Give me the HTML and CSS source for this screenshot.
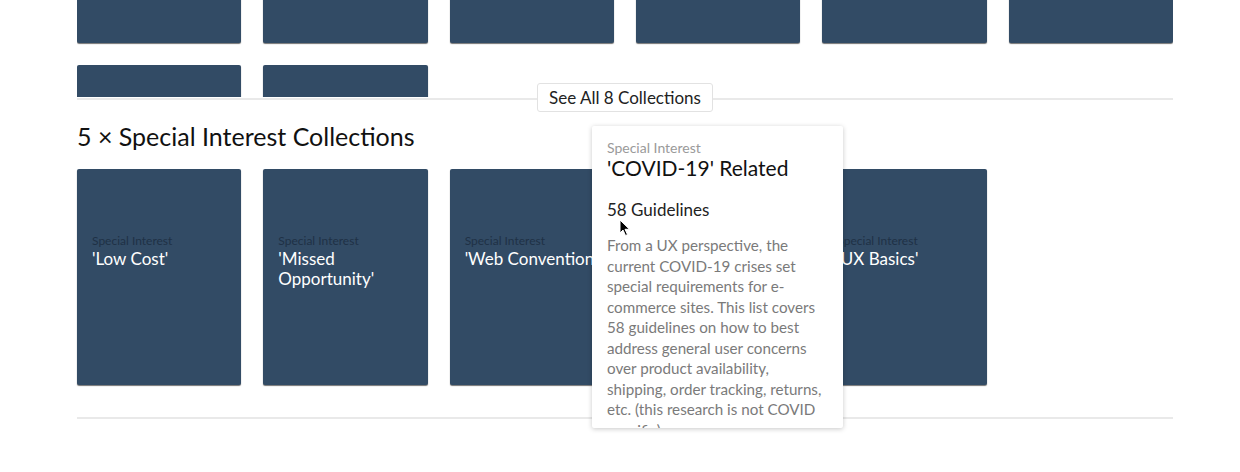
FILE: index.html
```html
<!DOCTYPE html>
<html>
<head>
<meta charset="utf-8">
<link rel="stylesheet" href="styles.css">
</head>
<body>
<div class="page">
  <section class="collection-group">
    <div class="grid-clip">
      <div class="grid grid-scrolled">
        <div class="card"></div><div class="card"></div><div class="card"></div>
        <div class="card"></div><div class="card"></div><div class="card"></div>
        <div class="card"></div><div class="card"></div>
      </div>
    </div>
    <div class="see-all-row">
      <button class="see-all">See All 8 Collections</button>
    </div>
  </section>

  <section class="collection-group">
    <h2 class="group-title">5 × Special Interest Collections</h2>
    <div class="grid">
      <div class="card"><div class="card-label">Special Interest</div><div class="card-title">'Low Cost'</div></div>
      <div class="card"><div class="card-label">Special Interest</div><div class="card-title">'Missed Opportunity'</div></div>
      <div class="card"><div class="card-label">Special Interest</div><div class="card-title">'Web Conventions'</div></div>
      <div class="card"><div class="card-label">Special Interest</div><div class="card-title">'COVID-19' Related</div></div>
      <div class="card"><div class="card-label">Special Interest</div><div class="card-title">'UX Basics'</div></div>
    </div>
    <div class="group-end"></div>
  </section>
</div>

<div class="popover">
  <div class="pop-label">Special Interest</div>
  <div class="pop-title">'COVID-19' Related</div>
  <div class="pop-count">58 Guidelines</div>
  <p class="pop-desc">From a UX perspective, the current COVID-19 crises set special requirements for e-commerce sites. This list covers 58 guidelines on how to best address general user concerns over product availability, shipping, order tracking, returns, etc. (this research is not COVID specific).</p>
</div>

<svg class="cursor" width="12" height="18" viewBox="0 0 12 18">
  <path d="M1 1 L1 14 L4 11 L6.5 16.5 L8.5 15.6 L6 10.3 L10.5 10.3 Z" fill="#000" stroke="#fff" stroke-width="1"/>
</svg>
</body>
</html>
```

FILE: styles.css
```css
* { box-sizing: border-box; }
html, body { margin: 0; padding: 0; background: #fff; }
body {
  font-family: "Lato", "Open Sans", sans-serif;
  color: #1a1a1a;
  overflow: hidden;
  height: 472px;
  position: relative;
}
.page {
  width: 1096px;
  margin-left: 77px;
}
.grid {
  display: grid;
  grid-template-columns: repeat(6, 1fr);
  gap: 22px;
}
.grid-clip {
  height: 97px;
  overflow: hidden;
}
.grid-scrolled {
  margin-top: -173px;
}
.card {
  height: 216px;
  background: #324b65;
  border-radius: 2px;
  box-shadow: 0 1px 1px rgba(0, 0, 0, 0.55);
  padding: 64px 2px 0 15px;
}
.card-label {
  font-size: 12px;
  line-height: 16px;
  color: #1f3146;
}
.card-title {
  font-size: 17px;
  line-height: 20px;
  color: #fff;
}
.see-all-row {
  height: 2px;
  margin-top: 1px;
  background: #e9e9e9;
  display: flex;
  align-items: center;
  justify-content: center;
}
.see-all {
  font-family: inherit;
  font-size: 17px;
  color: #222;
  background: #fff;
  border: 1px solid #e2e2e2;
  border-radius: 3px;
  height: 29px;
  width: 176px;
  padding: 0;
  position: relative;
  top: -2px;
}
.group-title {
  font-size: 25px;
  font-weight: 400;
  line-height: 30px;
  margin: 21px 0 18px;
  color: #111;
}
.group-end {
  height: 2px;
  background: #e9e9e9;
  margin-top: 32px;
}
.popover {
  position: absolute;
  left: 592px;
  top: 126px;
  width: 251px;
  height: 302px;
  overflow: hidden;
  background: #fff;
  border-radius: 2px;
  box-shadow: 0 1px 5px rgba(0, 0, 0, 0.22);
  padding: 14px 15px 0;
}
.pop-label {
  font-size: 14px;
  line-height: 16px;
  color: #9a9a9a;
}
.pop-title {
  font-size: 21px;
  line-height: 24px;
  color: #111;
}
.pop-count {
  font-size: 17px;
  line-height: 22px;
  color: #222;
  margin-top: 19px;
}
.pop-desc {
  font-size: 15.2px;
  line-height: 20.5px;
  color: #7a7a7a;
  margin: 14px 0 0;
}
.cursor {
  position: absolute;
  left: 619px;
  top: 219px;
}
```
